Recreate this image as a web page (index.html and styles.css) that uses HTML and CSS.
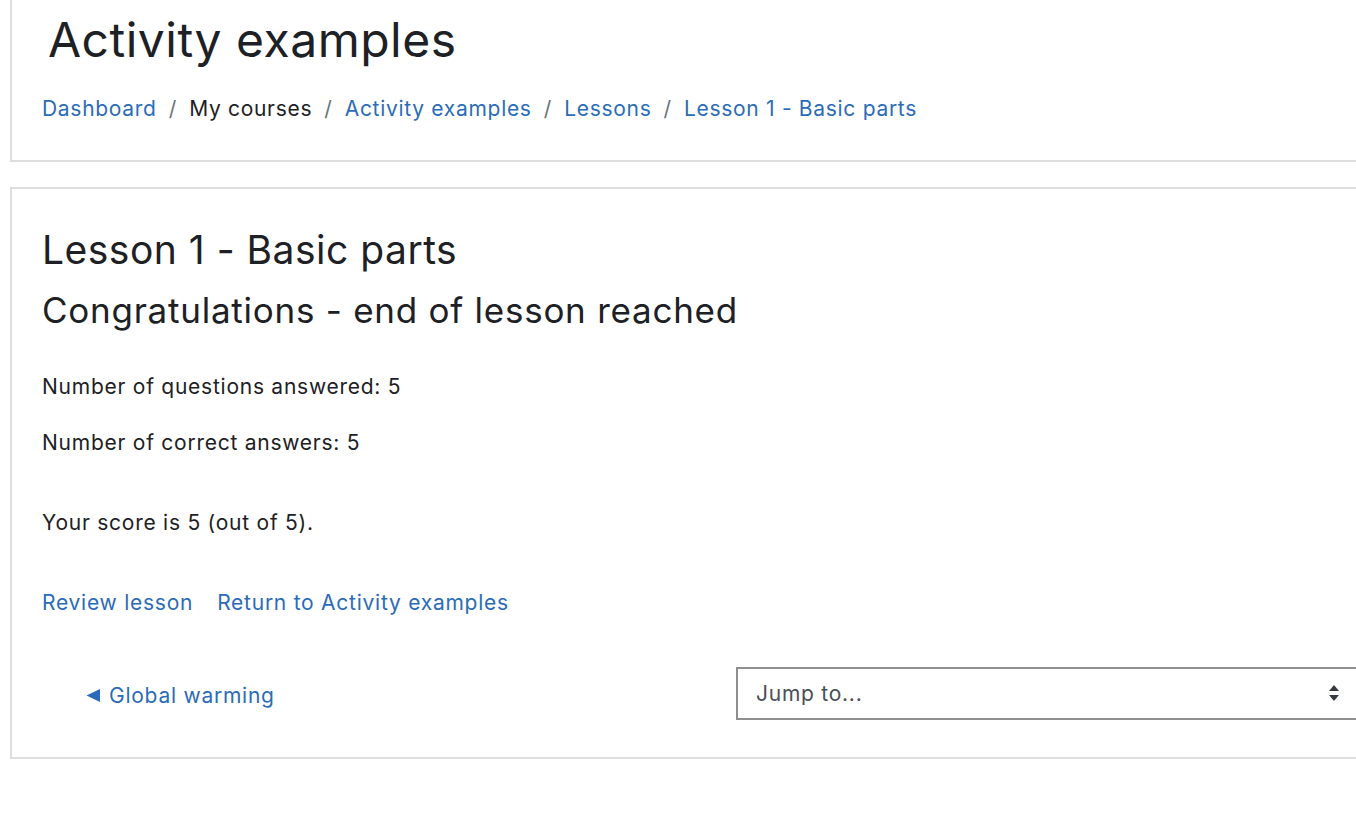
FILE: index.html
```html
<!DOCTYPE html>
<html lang="en">
<head>
  <meta charset="UTF-8" />
  <meta name="viewport" content="width=device-width, initial-scale=1.0"/>
  <title>Lesson 1 - Basic parts</title>
  <link rel="stylesheet" href="styles.css">
</head>
<body>
  <!-- Шапка курса -->
  <div class="card header-card">
    <h1 class="page-title">Activity examples</h1>
    <nav class="breadcrumb">
      <a href="#">Dashboard</a>
      <span class="sep">/</span>
      <span class="current">My courses</span>
      <span class="sep">/</span>
      <a href="#">Activity examples</a>
      <span class="sep">/</span>
      <a href="#">Lessons</a>
      <span class="sep">/</span>
      <a href="#">Lesson 1 - Basic parts</a>
    </nav>
  </div>

  <!-- Итог урока -->
  <div class="card main-card">
    <h2 class="lesson-title">Lesson 1 - Basic parts</h2>
    <h3 class="lesson-sub">Congratulations - end of lesson reached</h3>

    <p class="stat">Number of questions answered: 5</p>
    <p class="stat">Number of correct answers: 5</p>
    <p class="score">Your score is 5 (out of 5).</p>

    <div class="actions">
      <a href="#">Review lesson</a>
      <a href="#">Return to Activity examples</a>
    </div>

    <div class="nav-row">
      <a href="#" class="prev-link">
        <svg width="15" height="15" viewBox="0 0 15 15"><polygon points="0.5,7.5 14,1 14,14" fill="#2b6cb8"/></svg>
        Global warming
      </a>
      <div class="jump">
        <select>
          <option>Jump to...</option>
        </select>
        <svg class="jump-arrows" width="12" height="18" viewBox="0 0 12 18">
          <polygon points="6,1 11,7 1,7" fill="#343a40"/>
          <polygon points="1,11 11,11 6,17" fill="#343a40"/>
        </svg>
      </div>
    </div>
  </div>
</body>
</html>
```

FILE: styles.css
```css
body {
  margin: 0;
  padding-left: 10px;
  background: #fff;
  color: #1d2125;
  font-family: Inter, 'Noto Sans', sans-serif;
  overflow-x: hidden;
}
a {
  color: #2b6cb8;
  text-decoration: none;
}
.card {
  border: 2px solid #dedede;
  border-right: none;
  margin-right: -40px;
  padding: 0 30px;
}
.header-card {
  margin-top: -2px;
  padding-bottom: 36px;
}
.page-title {
  margin: 11px 0 0 6px;
  font-size: 48px;
  font-weight: 400;
  line-height: 58px;
  letter-spacing: 0.5px;
}
.breadcrumb {
  margin-top: 25px;
  font-size: 21px;
  line-height: 30px;
  letter-spacing: 0.7px;
}
.breadcrumb .sep {
  color: #6a737b;
  margin: 0 5.5px;
}
.main-card {
  margin-top: 25px;
  padding-top: 37px;
  padding-bottom: 37px;
}
.lesson-title {
  margin: 0;
  font-size: 39px;
  font-weight: 400;
  line-height: 48px;
  letter-spacing: 0.5px;
}
.lesson-sub {
  margin: 16px 0 0;
  font-size: 35px;
  font-weight: 400;
  line-height: 41px;
  letter-spacing: 0.75px;
}
.stat, .score {
  margin: 0;
  font-size: 21px;
  line-height: 31px;
  letter-spacing: 0.75px;
}
.stat:first-of-type {
  margin-top: 40px;
}
.stat + .stat {
  margin-top: 25px;
}
.score {
  margin-top: 49px;
}
.actions {
  margin-top: 49px;
  display: flex;
  gap: 24px;
  font-size: 21px;
  line-height: 31px;
  letter-spacing: 0.75px;
}
.nav-row {
  margin-top: 49px;
  display: grid;
  grid-template-columns: 694px 1fr;
  align-items: center;
}
.prev-link {
  margin-left: 44px;
  padding-top: 3px;
  font-size: 21px;
  letter-spacing: 0.75px;
  display: flex;
  align-items: center;
  gap: 8px;
}
.jump {
  position: relative;
}
.jump select {
  appearance: none;
  -webkit-appearance: none;
  width: 622px;
  height: 53px;
  border: 2px solid #8f8f8f;
  border-radius: 0;
  background: #fff;
  color: #495057;
  font-family: Inter, 'Noto Sans', sans-serif;
  font-size: 21px;
  letter-spacing: 0.75px;
  padding: 0 18px;
}
.jump-arrows {
  position: absolute;
  left: 592px;
  top: 17px;
}
```
